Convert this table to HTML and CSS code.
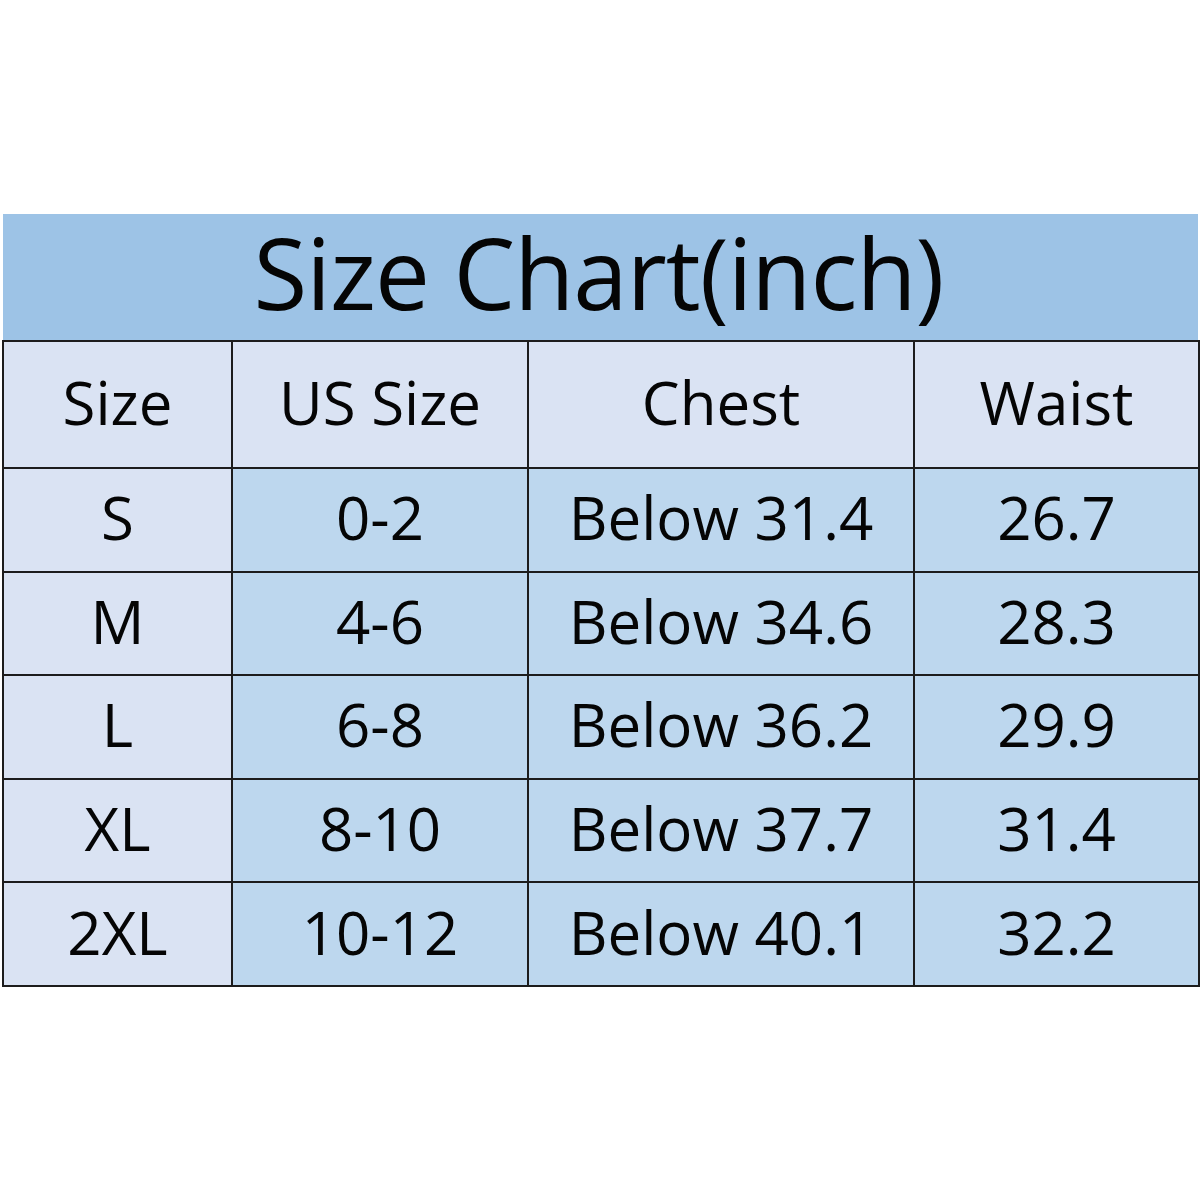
FILE: index.html
```html
<!DOCTYPE html>
<html>
<head>
<meta charset="utf-8">
<link rel="stylesheet" href="styles.css">
</head>
<body>
<div class="chart">
  <div class="title">Size Chart(inch)</div>
  <table class="grid">
    <colgroup>
      <col class="c1"><col class="c2"><col class="c3"><col class="c4">
    </colgroup>
    <tr class="head"><td>Size</td><td>US Size</td><td>Chest</td><td>Waist</td></tr>
    <tr><td class="sz">S</td><td>0-2</td><td>Below 31.4</td><td>26.7</td></tr>
    <tr><td class="sz">M</td><td>4-6</td><td>Below 34.6</td><td>28.3</td></tr>
    <tr><td class="sz">L</td><td>6-8</td><td>Below 36.2</td><td>29.9</td></tr>
    <tr><td class="sz">XL</td><td>8-10</td><td>Below 37.7</td><td>31.4</td></tr>
    <tr><td class="sz">2XL</td><td>10-12</td><td>Below 40.1</td><td>32.2</td></tr>
  </table>
</div>
</body>
</html>
```
FILE: styles.css
```css
html, body {
  margin: 0;
  padding: 0;
  background: #ffffff;
}
body {
  font-family: "Open Sans", "Liberation Sans", sans-serif;
  color: #050505;
}
.chart {
  margin-top: 214px;
  margin-left: 2px;
  width: 1196px;
}
.title {
  height: 126px;
  margin-left: 1px;
  background: #9dc3e6;
  text-align: center;
  font-size: 98px;
  line-height: 116px;
  letter-spacing: -1px;
  padding-right: 4px;
}
.grid {
  width: 1196px;
  border-collapse: collapse;
  table-layout: fixed;
}
.c1 { width: 229px; }
.c2 { width: 296px; }
.c3 { width: 386px; }
.c4 { width: 285px; }
.grid td {
  border: 2px solid #1c1c1c;
  background: #bdd7ee;
  text-align: center;
  font-size: 60px;
  height: 96.6px;
  padding: 0 0 5px 0;
  line-height: 1;
}
.grid tr.head td {
  background: #dae3f3;
  height: 120px;
}
.grid td.sz {
  background: #dae3f3;
}
```
